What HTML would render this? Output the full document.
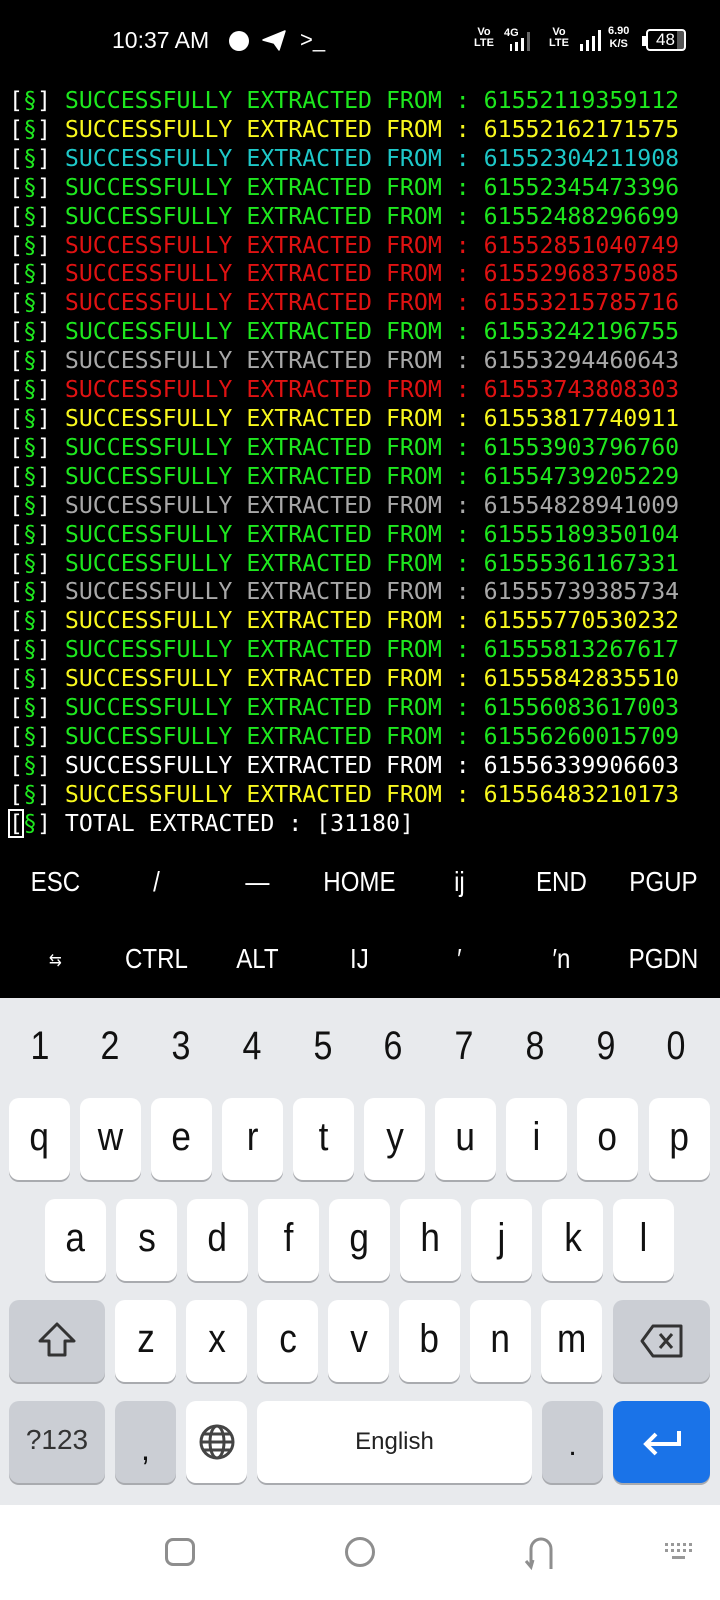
<!DOCTYPE html>
<html><head><meta charset="utf-8"><style>
*{margin:0;padding:0;box-sizing:border-box}
body{width:720px;height:1600px;background:#000;position:relative;overflow:hidden;font-family:"Liberation Sans",sans-serif}
.term{position:absolute;left:9px;top:87px;font-family:"DejaVu Sans Mono","Liberation Mono",monospace;font-size:23.2px;line-height:28.9px;white-space:pre;color:#fff}
.g{color:#1ee81e}.y{color:#f8f81e}.c{color:#1ec8c8}.r{color:#e01212}.a{color:#a8a8a8}.w{color:#fff}
.ek{position:absolute;width:102.86px;text-align:center;color:#fff;font-size:28px;transform:scaleX(.86)}
.kb{position:absolute;left:0;top:998px;width:720px;height:507px;background:#e8eaed}
.num{position:absolute;top:1024px;width:70px;text-align:center;font-size:40px;color:#111;transform:scaleX(.85)}
.k{position:absolute;width:61px;height:82px;background:#fff;border-radius:10px;box-shadow:0 2px 0 #a9abaf;text-align:center;font-size:40px;line-height:78px;color:#111}
.k span{display:inline-block;transform:scaleX(.88)}
.s{background:#cbced4}
.nav{position:absolute;left:0;top:1505px;width:720px;height:95px;background:#fff}
</style></head><body>
<div style="position:absolute;left:112px;top:27px;color:#fff;font-size:23px">10:37 AM</div>
<div style="position:absolute;left:229px;top:31px;width:20px;height:20px;border-radius:50%;background:#fff"></div>
<svg style="position:absolute;left:262px;top:30px" width="26" height="22" viewBox="0 0 26 22"><path d="M1 10 L23 1 L17 20 L12 13 Z M12 13 L23 1" fill="#fff" stroke="#fff" stroke-width="1.5" stroke-linejoin="round"/></svg>
<div style="position:absolute;left:300px;top:27px;color:#fff;font-size:22px">&gt;_</div>
<div style="position:absolute;left:474px;top:27px;color:#fff;font-size:11px;line-height:11px;font-weight:bold;text-align:center">Vo<br>LTE</div>
<div style="position:absolute;left:504px;top:27px;color:#fff;font-size:11px;font-weight:bold">4G</div>
<svg style="position:absolute;left:505px;top:28px" width="30" height="24"><rect x="5" y="16" width="2" height="7" fill="#fff"/><rect x="10" y="14" width="3" height="9" fill="#fff"/><rect x="16" y="10" width="3" height="13" fill="#fff"/><rect x="22" y="4" width="3" height="19" fill="#666"/></svg>
<div style="position:absolute;left:549px;top:27px;color:#fff;font-size:11px;line-height:11px;font-weight:bold;text-align:center">Vo<br>LTE</div>
<svg style="position:absolute;left:578px;top:28px" width="26" height="24"><rect x="2" y="16" width="3" height="7" fill="#fff"/><rect x="8" y="12" width="3" height="11" fill="#fff"/><rect x="14" y="8" width="3" height="15" fill="#fff"/><rect x="20" y="2" width="3" height="21" fill="#fff"/></svg>
<div style="position:absolute;left:608px;top:25px;color:#fff;font-size:11px;line-height:13px;font-weight:bold;text-align:center">6.90<br>K/S</div>
<div style="position:absolute;left:642px;top:36px;width:4px;height:10px;background:#fff"></div>
<div style="position:absolute;left:646px;top:29px;width:40px;height:22px;border:2px solid #fff;border-radius:4px;color:#fff;font-size:17px;line-height:18px;padding-left:8px;background:linear-gradient(90deg,#000 0,#000 80%,#555 80%)">48</div>

<div class="term"><span class="w">[</span><span class="g">§</span><span class="w">]</span> <span class="g">SUCCESSFULLY EXTRACTED FROM : 61552119359112</span>
<span class="w">[</span><span class="g">§</span><span class="w">]</span> <span class="y">SUCCESSFULLY EXTRACTED FROM : 61552162171575</span>
<span class="w">[</span><span class="g">§</span><span class="w">]</span> <span class="c">SUCCESSFULLY EXTRACTED FROM : 61552304211908</span>
<span class="w">[</span><span class="g">§</span><span class="w">]</span> <span class="g">SUCCESSFULLY EXTRACTED FROM : 61552345473396</span>
<span class="w">[</span><span class="g">§</span><span class="w">]</span> <span class="g">SUCCESSFULLY EXTRACTED FROM : 61552488296699</span>
<span class="w">[</span><span class="g">§</span><span class="w">]</span> <span class="r">SUCCESSFULLY EXTRACTED FROM : 61552851040749</span>
<span class="w">[</span><span class="g">§</span><span class="w">]</span> <span class="r">SUCCESSFULLY EXTRACTED FROM : 61552968375085</span>
<span class="w">[</span><span class="g">§</span><span class="w">]</span> <span class="r">SUCCESSFULLY EXTRACTED FROM : 61553215785716</span>
<span class="w">[</span><span class="g">§</span><span class="w">]</span> <span class="g">SUCCESSFULLY EXTRACTED FROM : 61553242196755</span>
<span class="w">[</span><span class="g">§</span><span class="w">]</span> <span class="a">SUCCESSFULLY EXTRACTED FROM : 61553294460643</span>
<span class="w">[</span><span class="g">§</span><span class="w">]</span> <span class="r">SUCCESSFULLY EXTRACTED FROM : 61553743808303</span>
<span class="w">[</span><span class="g">§</span><span class="w">]</span> <span class="y">SUCCESSFULLY EXTRACTED FROM : 61553817740911</span>
<span class="w">[</span><span class="g">§</span><span class="w">]</span> <span class="g">SUCCESSFULLY EXTRACTED FROM : 61553903796760</span>
<span class="w">[</span><span class="g">§</span><span class="w">]</span> <span class="g">SUCCESSFULLY EXTRACTED FROM : 61554739205229</span>
<span class="w">[</span><span class="g">§</span><span class="w">]</span> <span class="a">SUCCESSFULLY EXTRACTED FROM : 61554828941009</span>
<span class="w">[</span><span class="g">§</span><span class="w">]</span> <span class="g">SUCCESSFULLY EXTRACTED FROM : 61555189350104</span>
<span class="w">[</span><span class="g">§</span><span class="w">]</span> <span class="g">SUCCESSFULLY EXTRACTED FROM : 61555361167331</span>
<span class="w">[</span><span class="g">§</span><span class="w">]</span> <span class="a">SUCCESSFULLY EXTRACTED FROM : 61555739385734</span>
<span class="w">[</span><span class="g">§</span><span class="w">]</span> <span class="y">SUCCESSFULLY EXTRACTED FROM : 61555770530232</span>
<span class="w">[</span><span class="g">§</span><span class="w">]</span> <span class="g">SUCCESSFULLY EXTRACTED FROM : 61555813267617</span>
<span class="w">[</span><span class="g">§</span><span class="w">]</span> <span class="y">SUCCESSFULLY EXTRACTED FROM : 61555842835510</span>
<span class="w">[</span><span class="g">§</span><span class="w">]</span> <span class="g">SUCCESSFULLY EXTRACTED FROM : 61556083617003</span>
<span class="w">[</span><span class="g">§</span><span class="w">]</span> <span class="g">SUCCESSFULLY EXTRACTED FROM : 61556260015709</span>
<span class="w">[</span><span class="g">§</span><span class="w">]</span> <span class="w">SUCCESSFULLY EXTRACTED FROM : 61556339906603</span>
<span class="w">[</span><span class="g">§</span><span class="w">]</span> <span class="y">SUCCESSFULLY EXTRACTED FROM : 61556483210173</span>
<span style="outline:2px solid #fff;outline-offset:-1px" class="w">[</span><span class="g">§</span><span class="w">]</span> <span class="w">TOTAL EXTRACTED : [31180]</span></div>

<div class="ek" style="left:4px;top:866px">ESC</div>
<div class="ek" style="left:105px;top:866px">/</div>
<div class="ek" style="left:206px;top:866px">—</div>
<div class="ek" style="left:308px;top:866px">HOME</div>
<div class="ek" style="left:408px;top:866px">ij</div>
<div class="ek" style="left:510px;top:866px">END</div>
<div class="ek" style="left:612px;top:866px">PGUP</div>
<div class="ek" style="left:4px;font-size:18px;top:950px">⇆</div>
<div class="ek" style="left:105px;top:943px">CTRL</div>
<div class="ek" style="left:206px;top:943px">ALT</div>
<div class="ek" style="left:308px;top:943px">IJ</div>
<div class="ek" style="left:408px;top:943px">′</div>
<div class="ek" style="left:510px;top:943px">′n</div>
<div class="ek" style="left:612px;top:943px">PGDN</div>

<div class="kb"></div>
<div class="num" style="left:5px">1</div><div class="num" style="left:75px">2</div><div class="num" style="left:146px">3</div><div class="num" style="left:217px">4</div><div class="num" style="left:288px">5</div><div class="num" style="left:358px">6</div><div class="num" style="left:429px">7</div><div class="num" style="left:500px">8</div><div class="num" style="left:571px">9</div><div class="num" style="left:641px">0</div>

<div class="k" style="left:9px;top:1098px"><span>q</span></div>
<div class="k" style="left:80px;top:1098px"><span>w</span></div>
<div class="k" style="left:151px;top:1098px"><span>e</span></div>
<div class="k" style="left:222px;top:1098px"><span>r</span></div>
<div class="k" style="left:293px;top:1098px"><span>t</span></div>
<div class="k" style="left:364px;top:1098px"><span>y</span></div>
<div class="k" style="left:435px;top:1098px"><span>u</span></div>
<div class="k" style="left:506px;top:1098px"><span>i</span></div>
<div class="k" style="left:577px;top:1098px"><span>o</span></div>
<div class="k" style="left:649px;top:1098px"><span>p</span></div>

<div class="k" style="left:45px;top:1199px"><span>a</span></div>
<div class="k" style="left:116px;top:1199px"><span>s</span></div>
<div class="k" style="left:187px;top:1199px"><span>d</span></div>
<div class="k" style="left:258px;top:1199px"><span>f</span></div>
<div class="k" style="left:329px;top:1199px"><span>g</span></div>
<div class="k" style="left:400px;top:1199px"><span>h</span></div>
<div class="k" style="left:471px;top:1199px"><span>j</span></div>
<div class="k" style="left:542px;top:1199px"><span>k</span></div>
<div class="k" style="left:613px;top:1199px"><span>l</span></div>

<div class="k s" style="left:9px;top:1300px;width:96px"><svg width="40" height="40" viewBox="0 0 40 40" style="margin-top:20px"><path d="M20 4 L37 21 L28 21 L28 35 L12 35 L12 21 L3 21 Z" fill="none" stroke="#333" stroke-width="3" stroke-linejoin="round"/></svg></div>
<div class="k" style="left:115px;top:1300px"><span>z</span></div>
<div class="k" style="left:186px;top:1300px"><span>x</span></div>
<div class="k" style="left:257px;top:1300px"><span>c</span></div>
<div class="k" style="left:328px;top:1300px"><span>v</span></div>
<div class="k" style="left:399px;top:1300px"><span>b</span></div>
<div class="k" style="left:470px;top:1300px"><span>n</span></div>
<div class="k" style="left:541px;top:1300px"><span>m</span></div>
<div class="k s" style="left:613px;top:1300px;width:97px"><svg width="46" height="36" viewBox="0 0 46 36" style="margin-top:23px"><path d="M14 3 L42 3 L42 33 L14 33 L3 18 Z" fill="none" stroke="#333" stroke-width="3" stroke-linejoin="round"/><path d="M21 11 L33 25 M33 11 L21 25" stroke="#333" stroke-width="3"/></svg></div>

<div class="k s" style="left:9px;top:1401px;width:96px;font-size:28px;color:#333">?123</div>
<div class="k s" style="left:115px;top:1401px;font-size:32px;line-height:96px">,</div>
<div class="k" style="left:186px;top:1401px"><svg width="38" height="38" viewBox="0 0 38 38" style="margin-top:22px"><g fill="none" stroke="#444" stroke-width="3"><circle cx="19" cy="19" r="16"/><ellipse cx="19" cy="19" rx="7" ry="16"/><path d="M3 19 H35 M6 11 H32 M6 27 H32"/></g></svg></div>
<div class="k" style="left:257px;top:1401px;width:275px;font-size:24px;line-height:82px;color:#222">English</div>
<div class="k s" style="left:542px;top:1401px;font-size:30px;line-height:90px">.</div>
<div class="k" style="left:613px;top:1401px;width:97px;background:#1a73e8"><svg width="42" height="30" viewBox="0 0 42 30" style="margin-top:28px"><path d="M38 2 V15 H6 M15 5 L5 15 L15 25" fill="none" stroke="#fff" stroke-width="4"/></svg></div>

<div class="nav"></div>
<div style="position:absolute;left:165px;top:1538px;width:30px;height:28px;border:3px solid #8e8e8e;border-radius:8px"></div>
<div style="position:absolute;left:345px;top:1537px;width:30px;height:30px;border:3px solid #8e8e8e;border-radius:50%"></div>
<svg style="position:absolute;left:524px;top:1533px" width="34" height="38" viewBox="0 0 34 38"><path d="M27 36 V16 A10 10 0 0 0 7 16 V32 M2 28 L7 34 L9 27" fill="none" stroke="#8e8e8e" stroke-width="3"/></svg>
<svg style="position:absolute;left:664px;top:1542px" width="32" height="20"><g fill="#999"><rect x="1" y="1" width="3" height="3"/><rect x="7" y="1" width="3" height="3"/><rect x="13" y="1" width="3" height="3"/><rect x="19" y="1" width="3" height="3"/><rect x="25" y="1" width="3" height="3"/><rect x="1" y="7" width="3" height="3"/><rect x="7" y="7" width="3" height="3"/><rect x="13" y="7" width="3" height="3"/><rect x="19" y="7" width="3" height="3"/><rect x="25" y="7" width="3" height="3"/><rect x="8" y="14" width="13" height="3"/></g></svg>
</body></html>
